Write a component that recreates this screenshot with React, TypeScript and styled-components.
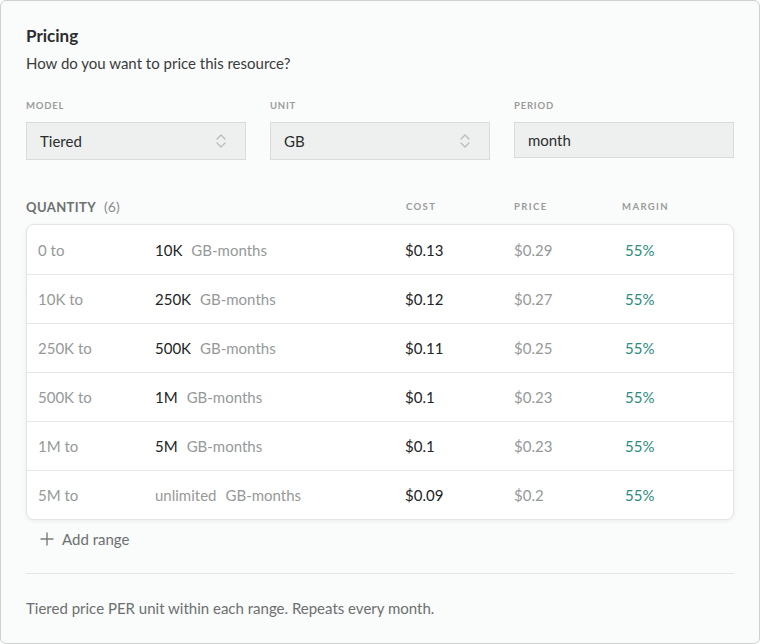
import React from "react";
import styled, { createGlobalStyle } from "styled-components";

const Global = createGlobalStyle`
  html, body { margin: 0; padding: 0; background: #ffffff; }
  body { font-family: Lato, "Noto Sans", sans-serif; -webkit-font-smoothing: antialiased; }
  * { box-sizing: border-box; }
`;

const Card = styled.div`
  width: 760px;
  height: 644px;
  border: 1px solid #cfd1d1;
  border-radius: 6px;
  background: #fafbfb;
  padding: 25px 25px 0 25px;
  display: flex;
  flex-direction: column;
`;

const Title = styled.h2`
  margin: 0;
  font-size: 17px;
  line-height: 20px;
  font-weight: 700;
  color: #2b2d2e;
`;

const Subtitle = styled.p`
  margin: 8px 0 0;
  font-size: 15px;
  line-height: 18px;
  color: #3a3c3d;
`;

const FieldRow = styled.div`
  display: grid;
  grid-template-columns: 220px 220px 220px;
  column-gap: 24px;
  margin-top: 28px;
`;

const Field = styled.div`
  display: flex;
  flex-direction: column;
  gap: 10px;
`;

const Label = styled.span`
  font-size: 9.5px;
  line-height: 12px;
  font-weight: 700;
  letter-spacing: 0.8px;
  text-transform: uppercase;
  color: #9a9c9c;
`;

const Box = styled.div<{ $tall?: boolean }>`
  height: ${(p) => (p.$tall ? 38 : 36)}px;
  background: #eef0ef;
  border: 1px solid #dadcdb;
  display: flex;
  align-items: center;
  justify-content: space-between;
  padding: 0 18px 0 13px;
  font-size: 15px;
  color: #2b2d2e;
`;

const Chevrons = () => (
  <svg width="12" height="16" viewBox="0 0 12 16" fill="none" stroke="#b9bcbb" strokeWidth="1.3" strokeLinecap="round" strokeLinejoin="round">
    <path d="M2 6 L6 2 L10 6" />
    <path d="M2 10 L6 14 L10 10" />
  </svg>
);

const TableHead = styled.div`
  display: grid;
  grid-template-columns: 380px 108px 108px 1fr;
  align-items: center;
  margin-top: 38px;
  height: 16px;
`;

const QtyLabel = styled.span`
  font-size: 13px;
  font-weight: 700;
  letter-spacing: 0.4px;
  color: #6d7070;
  text-transform: uppercase;
`;

const Count = styled.span`
  font-weight: 400;
  font-size: 14px;
  color: #8a8d8d;
  margin-left: 8px;
  letter-spacing: 0;
`;

const ColHead = styled.span`
  font-size: 9.5px;
  font-weight: 700;
  letter-spacing: 1.4px;
  color: #9a9c9c;
  text-transform: uppercase;
`;

const Table = styled.div`
  margin-top: 10px;
  background: #ffffff;
  border: 1px solid #e3e5e5;
  border-radius: 8px;
  box-shadow: 0 1px 4px rgba(0, 0, 0, 0.07);
  display: flex;
  flex-direction: column;
`;

const Row = styled.div`
  display: grid;
  grid-template-columns: 117px 250px 109px 111px 1fr;
  align-items: center;
  height: 49px;
  padding: 0 11px;
  font-size: 15px;
  & + & {
    border-top: 1px solid #e6e8e8;
  }
`;

const Muted = styled.span`
  color: #969999;
`;

const Strong = styled.span`
  color: #222425;
`;

const Unit = styled.span`
  color: #969999;
  margin-left: 9px;
`;

const Margin = styled.span`
  color: #2a8b7e;
`;

const AddRange = styled.button`
  margin-top: 9px;
  align-self: flex-start;
  display: flex;
  align-items: center;
  gap: 8px;
  background: none;
  border: none;
  padding: 0 0 0 14px;
  height: 20px;
  font-family: inherit;
  font-size: 15px;
  color: #6d7070;
  cursor: pointer;
`;

const Divider = styled.hr`
  margin: 24px 0 0;
  border: none;
  border-top: 1px solid #e3e5e5;
`;

const Footer = styled.p`
  margin: 25px 0 0;
  font-size: 15px;
  line-height: 18px;
  color: #6d7070;
`;

const rows = [
  { from: "0 to", to: "10K", cost: "$0.13", price: "$0.29", unlimited: false },
  { from: "10K to", to: "250K", cost: "$0.12", price: "$0.27", unlimited: false },
  { from: "250K to", to: "500K", cost: "$0.11", price: "$0.25", unlimited: false },
  { from: "500K to", to: "1M", cost: "$0.1", price: "$0.23", unlimited: false },
  { from: "1M to", to: "5M", cost: "$0.1", price: "$0.23", unlimited: false },
  { from: "5M to", to: "unlimited", cost: "$0.09", price: "$0.2", unlimited: true },
];

export default function App() {
  return (
    <>
      <Global />
      <Card>
        <Title>Pricing</Title>
        <Subtitle>How do you want to price this resource?</Subtitle>
        <FieldRow>
          <Field>
            <Label>Model</Label>
            <Box $tall>
              Tiered
              <Chevrons />
            </Box>
          </Field>
          <Field>
            <Label>Unit</Label>
            <Box $tall>
              GB
              <Chevrons />
            </Box>
          </Field>
          <Field>
            <Label>Period</Label>
            <Box>month</Box>
          </Field>
        </FieldRow>
        <TableHead>
          <QtyLabel>
            Quantity<Count>(6)</Count>
          </QtyLabel>
          <ColHead>Cost</ColHead>
          <ColHead>Price</ColHead>
          <ColHead>Margin</ColHead>
        </TableHead>
        <Table>
          {rows.map((r) => (
            <Row key={r.from}>
              <Muted>{r.from}</Muted>
              <span>
                {r.unlimited ? <Muted>{r.to}</Muted> : <Strong>{r.to}</Strong>}
                <Unit>GB-months</Unit>
              </span>
              <Strong>{r.cost}</Strong>
              <Muted>{r.price}</Muted>
              <Margin>55%</Margin>
            </Row>
          ))}
        </Table>
        <AddRange>
          <svg width="14" height="14" viewBox="0 0 14 14" stroke="#7a7d7d" strokeWidth="1.4" strokeLinecap="round">
            <path d="M7 1 V13 M1 7 H13" />
          </svg>
          Add range
        </AddRange>
        <Divider />
        <Footer>Tiered price PER unit within each range. Repeats every month.</Footer>
      </Card>
    </>
  );
}
